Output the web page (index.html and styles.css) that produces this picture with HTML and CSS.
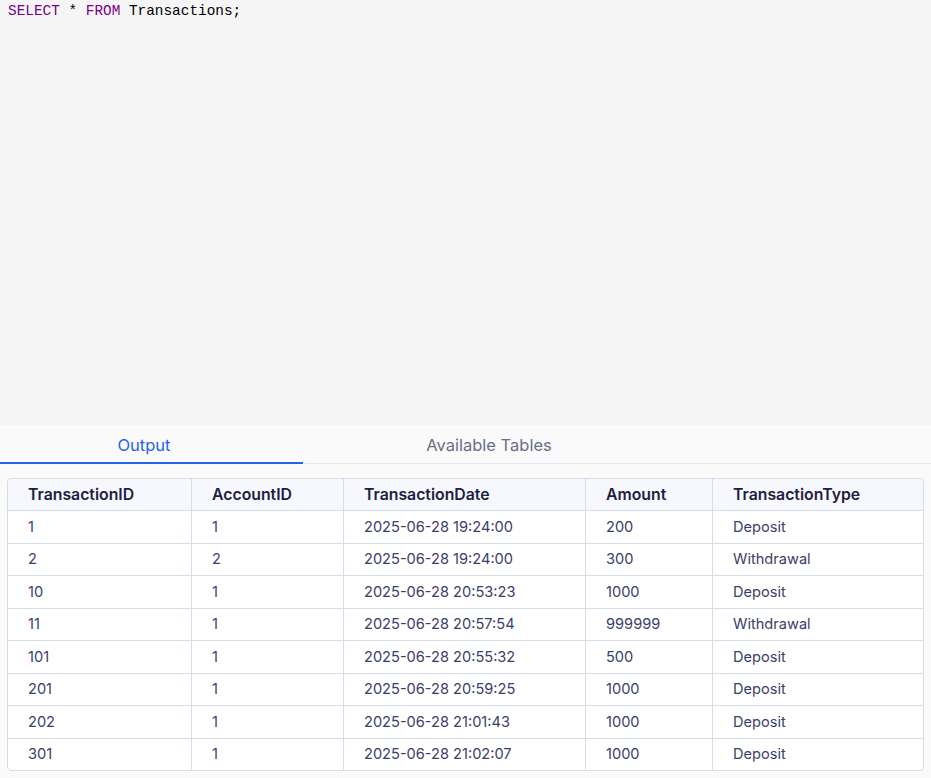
FILE: index.html
```html
<!DOCTYPE html>
<html>
<head>
<meta charset="utf-8">
<link rel="stylesheet" href="styles.css">
</head>
<body>
<div class="editor">
  <div class="code"><span class="kw">SELECT</span> * <span class="kw">FROM</span> Transactions;</div>
</div>
<div class="tabs">
  <div class="tab tab-output active">Output</div>
  <div class="tab tab-tables">Available Tables</div>
</div>
<div class="result">
  <table class="grid">
    <thead>
      <tr><th class="c1">TransactionID</th><th class="c2">AccountID</th><th class="c3">TransactionDate</th><th class="c4">Amount</th><th class="c5">TransactionType</th></tr>
    </thead>
    <tbody>
      <tr><td>1</td><td>1</td><td>2025-06-28 19:24:00</td><td>200</td><td>Deposit</td></tr>
      <tr><td>2</td><td>2</td><td>2025-06-28 19:24:00</td><td>300</td><td>Withdrawal</td></tr>
      <tr><td>10</td><td>1</td><td>2025-06-28 20:53:23</td><td>1000</td><td>Deposit</td></tr>
      <tr><td>11</td><td>1</td><td>2025-06-28 20:57:54</td><td>999999</td><td>Withdrawal</td></tr>
      <tr><td>101</td><td>1</td><td>2025-06-28 20:55:32</td><td>500</td><td>Deposit</td></tr>
      <tr><td>201</td><td>1</td><td>2025-06-28 20:59:25</td><td>1000</td><td>Deposit</td></tr>
      <tr><td>202</td><td>1</td><td>2025-06-28 21:01:43</td><td>1000</td><td>Deposit</td></tr>
      <tr><td>301</td><td>1</td><td>2025-06-28 21:02:07</td><td>1000</td><td>Deposit</td></tr>
    </tbody>
  </table>
</div>
</body>
</html>
```
FILE: styles.css
```css
html, body {
  margin: 0;
  padding: 0;
  background: #fafafa;
  font-family: "Inter", "Lato", sans-serif;
}
.editor {
  height: 425px;
  background: #f5f5f5;
  box-sizing: border-box;
  padding: 2px 8px 0;
}
.code {
  font-family: "Liberation Mono", "DejaVu Sans Mono", monospace;
  font-size: 14.4px;
  line-height: 19px;
  color: #000;
}
.kw { color: #770088; }
.tabs {
  display: flex;
  height: 38px;
  border-bottom: 1px solid #e5e7eb;
  background: #fafafa;
}
.tab {
  box-sizing: border-box;
  height: 38px;
  line-height: 40px;
  font-size: 16.5px;
  color: #6b6d88;
  text-align: center;
}
.tab-output {
  width: 303px;
  padding-right: 15px;
  color: #2563eb;
  border-bottom: 2px solid #2563eb;
  height: 39px;
}
.tab-tables {
  width: 372px;
}
.result {
  padding: 14px 7px 0 7px;
}
.grid {
  width: 917px;
  border-collapse: separate;
  border-spacing: 0;
  border: 1px solid #d6dce8;
  border-radius: 4px;
  background: #fff;
  table-layout: fixed;
  font-size: 14.6px;
}
.grid th, .grid td {
  text-align: left;
  padding: 0 0 0 20px;
  border-right: 1px solid #d6dce8;
  border-bottom: 1px solid #d6dce8;
  white-space: nowrap;
}
.grid td { height: 31.5px; }
.grid th:last-child, .grid td:last-child { border-right: none; }
.grid tbody tr:last-child td { border-bottom: none; }
.grid th {
  background: #f7f8fd;
  font-weight: 600;
  font-size: 15.8px;
  color: #1f2040;
  height: 30px;
  padding-bottom: 1px;
}
.grid thead tr th:first-child { border-top-left-radius: 4px; }
.grid thead tr th:last-child { border-top-right-radius: 4px; }
.grid td {
  color: #3b3d6a;
}
.c1 { width: 163px; }
.c2 { width: 131px; }
.c3 { width: 221px; }
.c4 { width: 106px; }
```
